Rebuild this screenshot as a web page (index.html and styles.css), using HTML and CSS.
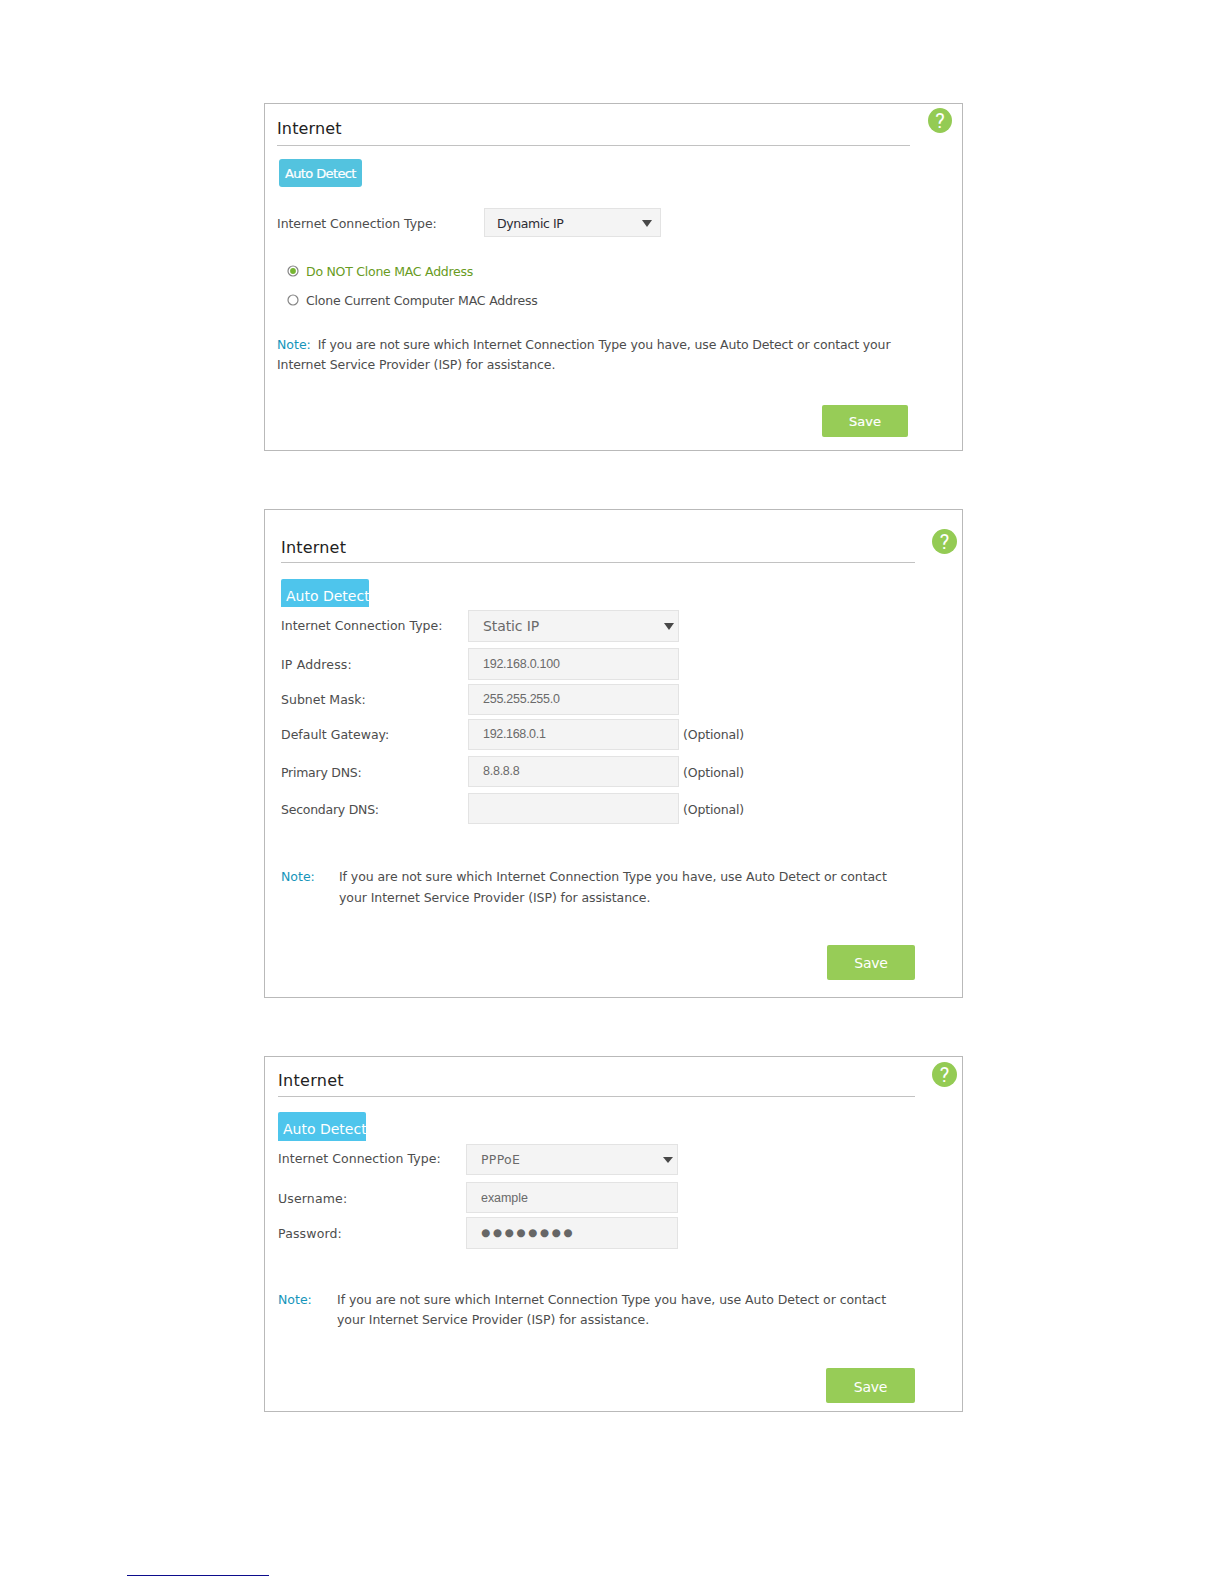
FILE: index.html
```html
<!DOCTYPE html>
<html lang="en">
<head>
<meta charset="utf-8">
<title>Internet</title>
<link rel="stylesheet" href="styles.css">
</head>
<body>
<main class="page">

  <section class="panel panel-dynamic">
    <div class="help">?</div>
    <h2 class="title">Internet</h2>
    <div class="detect"><span>Auto Detect</span></div>
    <div class="row">
      <div class="label">Internet Connection Type:</div>
      <div class="field select"><span>Dynamic IP</span><svg class="arrow" width="10" height="7" viewBox="0 0 10 7"><path d="M0 0H10L5 7Z"/></svg></div>
    </div>
    <div class="radios">
      <div class="radio checked"><svg width="12" height="12" viewBox="0 0 12 12"><circle class="ring" cx="6" cy="6" r="5"/><circle class="dot" cx="6" cy="6" r="2.9"/></svg><span>Do NOT Clone MAC Address</span></div>
      <div class="radio"><svg width="12" height="12" viewBox="0 0 12 12"><circle class="ring" cx="6" cy="6" r="5"/></svg><span>Clone Current Computer MAC Address</span></div>
    </div>
    <p class="note"><span class="note-tag">Note:</span><span class="note-first">If you are not sure which Internet Connection Type you have, use Auto Detect or contact your</span><br><span class="note-second">Internet Service Provider (ISP) for assistance.</span></p>
    <div class="save">Save</div>
  </section>

  <section class="panel panel-static">
    <div class="help">?</div>
    <h2 class="title">Internet</h2>
    <div class="detect"><span>Auto Detect</span></div>
    <div class="row row-type">
      <div class="label">Internet Connection Type:</div>
      <div class="field select"><span>Static IP</span><svg class="arrow" width="10" height="7" viewBox="0 0 10 7"><path d="M0 0H10L5 7Z"/></svg></div>
    </div>
    <div class="row row-ip">
      <div class="label loose">IP Address:</div>
      <div class="field">192.168.0.100</div>
    </div>
    <div class="row row-mask">
      <div class="label">Subnet Mask:</div>
      <div class="field">255.255.255.0</div>
    </div>
    <div class="row row-gateway">
      <div class="label">Default Gateway:</div>
      <div class="field tight">192.168.0.1</div>
      <div class="hint">(Optional)</div>
    </div>
    <div class="row row-dns">
      <div class="label snug">Primary DNS:</div>
      <div class="field">8.8.8.8</div>
      <div class="hint">(Optional)</div>
    </div>
    <div class="row row-dns">
      <div class="label snug">Secondary DNS:</div>
      <div class="field"></div>
      <div class="hint">(Optional)</div>
    </div>
    <div class="note">
      <div class="note-tag">Note:</div>
      <div>If you are not sure which Internet Connection Type you have, use Auto Detect or contact<br>your Internet Service Provider (ISP) for assistance.</div>
    </div>
    <div class="save">Save</div>
  </section>

  <section class="panel panel-pppoe">
    <div class="help">?</div>
    <h2 class="title">Internet</h2>
    <div class="detect"><span>Auto Detect</span></div>
    <div class="row row-type">
      <div class="label">Internet Connection Type:</div>
      <div class="field select"><span>PPPoE</span><svg class="arrow" width="10" height="6" viewBox="0 0 10 6"><path d="M0 0H10L5 6Z"/></svg></div>
    </div>
    <div class="row row-user">
      <div class="label loose">Username:</div>
      <div class="field">example</div>
    </div>
    <div class="row row-password">
      <div class="label loose">Password:</div>
      <div class="field dots">●●●●●●●●</div>
    </div>
    <div class="note">
      <div class="note-tag">Note:</div>
      <div>If you are not sure which Internet Connection Type you have, use Auto Detect or contact<br>your Internet Service Provider (ISP) for assistance.</div>
    </div>
    <div class="save">Save</div>
  </section>

  <div class="footer-rule"></div>
</main>
</body>
</html>
```
FILE: styles.css
```css
* { box-sizing: border-box; }

body {
  margin: 0;
  background: #fff;
  font-family: "DejaVu Sans", Verdana, sans-serif;
  font-size: 12.5px;
  color: #4d4d4d;
}

.page {
  display: flex;
  flex-direction: column;
  width: 1224px;
  height: 1584px;
  padding-top: 103px;
  overflow: hidden;
}

.panel {
  position: relative;
  display: flex;
  flex-direction: column;
  flex: none;
  width: 699px;
  margin-left: 264px;
  border: 1px solid #b9b9b9;
  white-space: nowrap;
}

.title {
  margin: 0;
  border-bottom: 1px solid #c2c2c2;
  font-size: 16px;
  font-weight: 400;
  line-height: 30px;
  letter-spacing: 0.2px;
  color: #222;
}

.help {
  position: absolute;
  width: 25px;
  height: 25px;
  border-radius: 50%;
  background: #94cb54;
  color: #fff;
  font: 400 20px/26px Roboto, "Liberation Sans", sans-serif;
  text-align: center;
}

.detect {
  overflow: hidden;
  background: #4ec5ec;
  color: #fff;
  font-size: 14px;
  letter-spacing: 0;
}

.row { display: flex; height: 31px; }
.label { letter-spacing: 0.01px; }
.label.loose { letter-spacing: 0.15px; }
.label.snug { letter-spacing: -0.25px; }

.field {
  flex: none;
  height: 31px;
  padding-left: 14px;
  border: 1px solid #e3e3e3;
  background: #f4f4f4;
  color: #6a6a6a;
  font: 12.5px/28px "Liberation Sans", Arial, sans-serif;
  letter-spacing: -0.25px;
}
.field.tight { letter-spacing: -0.32px; }

.select {
  display: flex;
  justify-content: space-between;
  align-items: center;
  font-family: "DejaVu Sans", Verdana, sans-serif;
}
.arrow { fill: #484848; }

.note { margin: 0; letter-spacing: -0.07px; }
.note-tag { color: #1595ba; letter-spacing: 0; }

.save {
  align-self: flex-end;
  border-radius: 2px;
  background: #97cc57;
  color: #fff;
  font-size: 14px;
  letter-spacing: -0.2px;
  text-align: center;
}

/* Dynamic IP */
.panel-dynamic { height: 348px; padding-left: 12px; }
.panel-dynamic .help { left: 663px; top: 4px; width: 24px; }
.panel-dynamic .title { width: 633px; padding: 10px 0 1px; letter-spacing: 0.15px; }
.panel-dynamic .detect {
  width: 83px;
  height: 28px;
  margin: 13px 0 0 2px;
  padding-left: 6px;
  border-radius: 3px;
  background: #53c3df;
  font-size: 13px;
  line-height: 29px;
  letter-spacing: -0.63px;
  -webkit-text-stroke: 0.2px #fff;
}
.panel-dynamic .row { margin-top: 21px; height: 29px; line-height: 31px; }
.panel-dynamic .label { width: 207px; letter-spacing: -0.06px; }
.panel-dynamic .field {
  width: 177px;
  height: 29px;
  padding: 2px 8px 0 12px;
  color: #2b2b33;
  letter-spacing: -0.38px;
}
.radios { margin: 20px 0 0 10px; }
.radio { display: flex; align-items: center; gap: 7px; height: 29px; letter-spacing: -0.19px; }
.radio svg { position: relative; top: -1px; left: -0.5px; }
.radio.checked { color: #689b22; letter-spacing: -0.25px; }
.ring { fill: #fff; stroke: #858585; stroke-width: 1.2; }
.dot { fill: #76b531; }
.panel-dynamic .note { margin-top: 20px; line-height: 20px; }
.panel-dynamic .note-tag { margin-right: 7px; }
.note-first { letter-spacing: -0.145px; }
.note-second { letter-spacing: -0.1px; }
.panel-dynamic .save {
  width: 86px;
  height: 32px;
  margin: 30px 54px 0 0;
  font-size: 13px;
  line-height: 33px;
  letter-spacing: 0;
  -webkit-text-stroke: 0.2px #fff;
}

/* Static IP */
.panel-static { height: 489px; margin-top: 58px; padding-left: 16px; }
.panel-static .help { left: 667px; top: 19px; }
.panel-static .title { width: 634px; padding: 23px 0 0; line-height: 29px; }
.panel-static .detect {
  width: 88px;
  height: 28px;
  margin-top: 16px;
  padding-left: 5px;
  border-radius: 2px 2px 0 0;
  line-height: 34px;
}
.panel-static .row { line-height: 32px; }
.panel-static .label { width: 187px; }
.panel-static .field { width: 211px; }
.panel-static .row-type { height: 32px; margin-top: 3px; line-height: 31px; }
.panel-static .select {
  height: 32px;
  padding: 0 4px 0 14px;
  font-size: 14px;
  letter-spacing: -0.1px;
}
.panel-static .row-ip { height: 32px; margin-top: 6px; }
.row-ip .field { height: 32px; line-height: 30px; }
.row-ip .label { line-height: 33px; }
.row-mask { margin-top: 4px; }
.row-gateway { margin-top: 4px; }
.panel-static .row-dns { margin-top: 6px; line-height: 33px; }
.hint { margin-left: 4px; letter-spacing: -0.16px; }
.panel-static .note { display: flex; margin-top: 42px; line-height: 21px; }
.panel-static .note-tag { width: 58px; }
.panel-static .save { width: 88px; height: 35px; margin: 37px 47px 0 0; line-height: 37px; }

/* PPPoE */
.panel-pppoe { height: 356px; margin-top: 58px; padding-left: 13px; }
.panel-pppoe .help { left: 667px; top: 5px; }
.panel-pppoe .title { width: 637px; padding: 9px 0 0; letter-spacing: 0.3px; }
.panel-pppoe .detect {
  width: 88px;
  height: 29px;
  margin-top: 15px;
  padding-left: 5px;
  border-radius: 2px 2px 0 0;
  line-height: 34px;
}
.panel-pppoe .row { line-height: 33px; }
.panel-pppoe .row-type { margin-top: 3px; line-height: 29px; }
.panel-pppoe .row-type .label { letter-spacing: 0.06px; }
.panel-pppoe .label { width: 188px; }
.panel-pppoe .field { width: 212px; }
.panel-pppoe .select { padding: 1px 4px 0 14px; letter-spacing: 0.3px; }
.row-user { margin-top: 7px; }
.panel-pppoe .row-user .field { line-height: 30px; letter-spacing: -0.05px; }
.panel-pppoe .row-password { height: 32px; margin-top: 4px; }
.row-password .label { line-height: 33px; }
.panel-pppoe .dots {
  height: 32px;
  padding-left: 14px;
  color: #666;
  font-family: "DejaVu Sans", sans-serif;
  font-size: 10.5px;
  line-height: 29px;
  letter-spacing: 2.6px;
}
.panel-pppoe .note { display: flex; margin-top: 41px; line-height: 20px; letter-spacing: -0.055px; }
.panel-pppoe .note-tag { width: 59px; }
.panel-pppoe .save { width: 89px; height: 35px; margin: 38px 47px 0 0; line-height: 38px; }

.footer-rule { flex: none; width: 142px; height: 1px; margin: 163px 0 0 127px; background: #0c0c8c; }
```
